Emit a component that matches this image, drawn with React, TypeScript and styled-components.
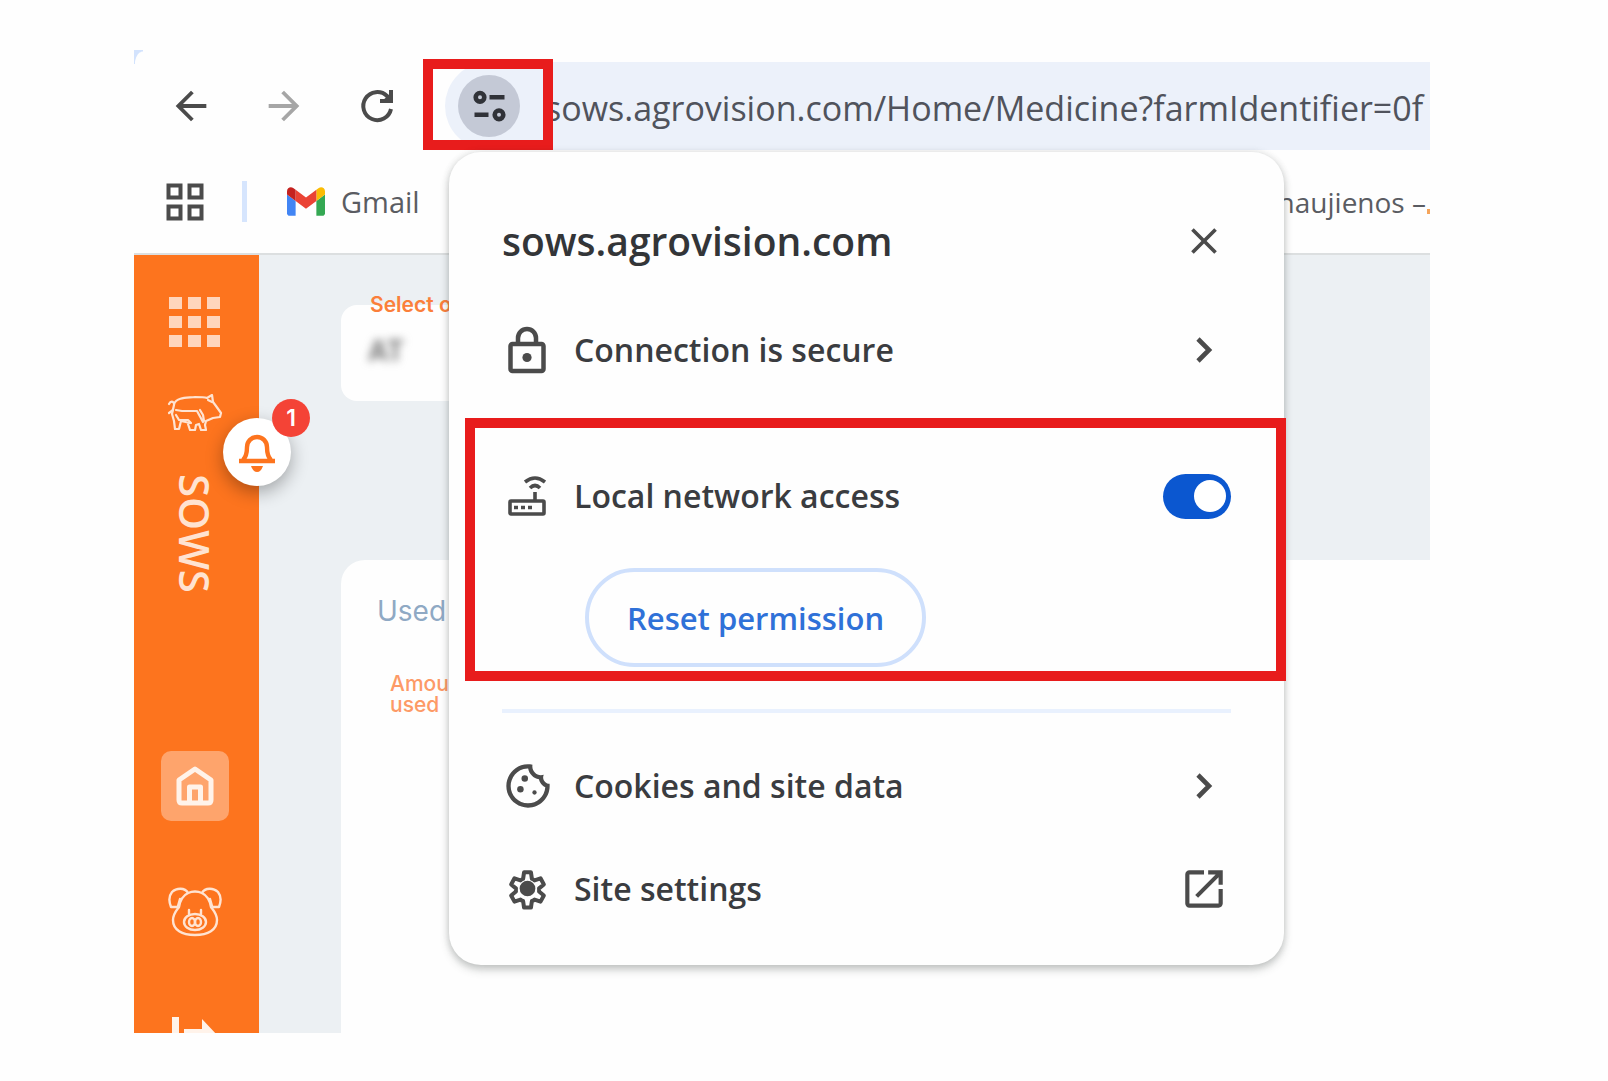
import React from "react";
import styled, { createGlobalStyle } from "styled-components";
import {
  MdArrowBack,
  MdArrowForward,
  MdClose,
  MdOpenInNew,
  MdOutlineCookie,
} from "react-icons/md";

const uiFont = `"Open Sans", "Noto Sans", sans-serif`;
const appFont = `Inter, "Open Sans", sans-serif`;
const ink = "#4b4b4b";
const orange = "#fd741e";

const GlobalStyle = createGlobalStyle`
  * { box-sizing: border-box; }
  body { margin: 0; background: #fefefe; font-family: ${uiFont}; }
  button { border: 0; padding: 0; background: none; font: inherit; color: inherit; cursor: pointer; }
  svg { display: block; flex: none; }
`;

const Page = styled.main`
  height: 100vh;
  padding: 50px 178px 48px 134px;
`;

const Browser = styled.div`
  position: relative;
  height: 100%;
  display: flex;
  flex-direction: column;
  overflow: hidden;

  &::before {
    content: "";
    position: absolute;
    top: 0;
    left: 0;
    width: 9px;
    height: 14px;
    background: radial-gradient(ellipse at 100% 100%, transparent 60%, #d3e3fd 66%);
  }
`;

const Toolbar = styled.header`
  display: flex;
  align-items: center;
  padding: 12px 0 0 26px;
`;

const NavButtons = styled.nav`
  display: flex;
  gap: 31px;
  margin-right: 37px;
`;

const NavButton = styled.button<{ $dim?: boolean }>`
  display: grid;
  place-items: center;
  width: 62px;
  height: 62px;
  color: ${(p) => (p.$dim ? "#a6a6a6" : ink)};
`;

const Omnibox = styled.div`
  position: relative;
  flex: 1;
  min-width: 0;
  display: flex;
  align-items: center;
  gap: 25px;
  height: 88px;
  padding-left: 13px;
  border-radius: 44px 0 0 44px;
  background: #ecf1fa;
`;

const SiteInfoButton = styled.button`
  display: grid;
  place-items: center;
  flex: none;
  width: 62px;
  height: 62px;
  border-radius: 50%;
  background: #c4c9d6;
  color: #303238;
`;

const UrlInput = styled.input`
  flex: 1;
  min-width: 0;
  border: 0;
  padding: 4px 0 0;
  outline: 0;
  background: none;
  font: 400 34px/48px ${uiFont};
  color: #50535c;
`;

const ButtonMarker = styled.div`
  position: absolute;
  top: -3px;
  left: -22px;
  width: 130px;
  height: 91px;
  border: 10px solid #e81c1c;
  pointer-events: none;
`;

const Bookmarks = styled.nav`
  display: flex;
  align-items: center;
  height: 105px;
  padding-left: 32px;
  border-bottom: 2px solid #dcdfe0;
`;

const Separator = styled.span`
  width: 5px;
  height: 41px;
  margin: 0 40px 0 38px;
  background: #d6e5fd;
`;

const Bookmark = styled.a`
  display: flex;
  align-items: center;
  gap: 16px;
  white-space: nowrap;
  text-decoration: none;
  font-size: 29px;
  line-height: 40px;
  color: #5a5c62;
`;

const LastBookmark = styled(Bookmark)`
  margin-left: auto;
  gap: 0;
  font-size: 28px;

  &::after {
    content: "";
    align-self: flex-end;
    width: 3px;
    height: 5px;
    margin: 0 0 8px 1px;
    background: #f5a55b;
  }
`;

const AppArea = styled.div`
  position: relative;
  flex: 1;
  min-height: 0;
  display: flex;
  background: #ecf0f3;
  font-family: ${appFont};
`;

const Sidebar = styled.aside`
  flex: none;
  display: flex;
  flex-direction: column;
  align-items: center;
  width: 125px;
  padding: 42px 4px 0 0;
  background: ${orange};
  color: #ffe3d1;
`;

const ModuleName = styled.strong`
  height: 120px;
  margin: 43px 0 158px;
  writing-mode: vertical-rl;
  font-family: ${uiFont};
  font-size: 42px;
  line-height: 44px;
  font-weight: 600;
`;

const SideButton = styled.button<{ $active?: boolean }>`
  display: grid;
  place-items: center;
  flex: none;
  width: 68px;
  height: 70px;
  border-radius: 10px;
  background: ${(p) => (p.$active ? "#fea46c" : "none")};
  color: ${(p) => (p.$active ? "#fff3ea" : "#ffe3d1")};
`;

const SideLinks = styled.nav`
  display: flex;
  flex-direction: column;
  gap: 56px;
`;

const PlainSideButton = styled.button`
  margin-bottom: 47px;
`;

const Alerts = styled.button`
  position: absolute;
  top: 163px;
  left: 89px;
  display: grid;
  place-items: center;
  width: 68px;
  height: 68px;
  border-radius: 50%;
  background: #ffffff;
  color: ${orange};
  box-shadow: 0 6px 18px rgba(0, 0, 0, 0.32);
`;

const AlertCount = styled.span`
  position: absolute;
  top: -19px;
  right: -19px;
  width: 38px;
  height: 38px;
  border-radius: 50%;
  background: #f44336;
  color: #ffffff;
  font: 600 23px/38px ${appFont};
  text-align: center;
`;

const Content = styled.section`
  flex: 1;
  min-width: 0;
  display: flex;
  flex-direction: column;
  gap: 159px;
  padding: 50px 0 0 82px;
`;

const Field = styled.div`
  position: relative;
  width: 480px;
  height: 96px;
  padding: 26px 27px;
  border-radius: 16px;
  background: #fefefe;
`;

const FieldLabel = styled.label`
  position: absolute;
  top: -14px;
  left: 29px;
  font-size: 21px;
  line-height: 28px;
  font-weight: 600;
  color: #fb7f3a;
`;

const FieldInput = styled.input`
  width: 100%;
  border: 0;
  padding: 0;
  background: none;
  font: 600 28px/40px ${appFont};
  color: #6c6c6c;
  filter: blur(4px);
`;

const Panel = styled.article`
  flex: 1;
  padding: 29px 36px;
  border-radius: 24px 0 0 0;
  background: #fefefe;
`;

const PanelTitle = styled.h2`
  margin: 0 0 40px;
  font-size: 28px;
  line-height: 44px;
  font-weight: 400;
  color: #8fa9c4;
`;

const ColumnLabel = styled.p`
  width: 80px;
  margin: 0 0 0 13px;
  font-size: 21px;
  line-height: 21px;
  font-weight: 500;
  color: #fd9a66;
`;

const Popup = styled.section`
  position: absolute;
  top: 102px;
  left: 315px;
  width: 835px;
  padding-bottom: 25px;
  border-radius: 32px;
  background: #fefefe;
  box-shadow: 0 5px 8px rgba(60, 70, 66, 0.26), 0 0 7px rgba(60, 70, 66, 0.16);
  color: #3a3c40;
`;

const PopupHeader = styled.header`
  display: flex;
  align-items: center;
  justify-content: space-between;
  height: 146px;
  padding: 32px 53px 0;
`;

const PopupTitle = styled.h1`
  margin: 0;
  font-size: 39px;
  line-height: 48px;
  font-weight: 600;
  color: #333538;
`;

const EndSlot = styled.span`
  display: grid;
  place-items: center;
  width: 54px;
  height: 54px;
  color: ${ink};
`;

const rowLayout = `
  display: flex;
  align-items: center;
  gap: 22px;
  width: 100%;
  text-align: left;
  font-size: 32px;
  line-height: 44px;
  font-weight: 600;
`;

const RowButton = styled.button`
  && {
    ${rowLayout}
    height: 103px;
    padding: 0 53px;
  }
`;

const ToggleRow = styled.label`
  ${rowLayout}
  height: 136px;
`;

const RowIcon = styled.span`
  display: grid;
  place-items: center;
  width: 50px;
  color: ${ink};
`;

const RowText = styled.span`
  flex: 1;
`;

const Permission = styled.div`
  margin: 17px -2px 28px 16px;
  padding: 0 45px 4px 27px;
  border: 10px solid #e81c1c;
`;

const Toggle = styled.input`
  appearance: none;
  display: flex;
  justify-content: flex-end;
  align-items: center;
  width: 68px;
  height: 45px;
  margin: 0;
  padding: 5px;
  border-radius: 23px;
  background: #0b57d0;

  &::before {
    content: "";
    width: 32px;
    height: 32px;
    border-radius: 50%;
    background: #ffffff;
  }

  &:not(:checked) {
    justify-content: flex-start;
    background: #8a8d93;
  }
`;

const ResetButton = styled.button`
  && {
    height: 99px;
    margin: 4px 0 0 83px;
    padding: 0 38px;
    border: 4px solid #cfe0fc;
    border-radius: 50px;
    font-size: 31px;
    line-height: 44px;
    font-weight: 600;
    color: #2f71d8;
  }
`;

const Divider = styled.hr`
  height: 4px;
  margin: 0 53px 21px;
  border: 0;
  background: #e9f1fe;
`;

const ReloadIcon = () => (
  <svg width="36" height="36" viewBox="0 0 36 36" fill="none" stroke="currentColor" strokeWidth="4">
    <path d="M32 21A14 14 0 1 1 28 8l4 4" />
    <path d="M32 2v11H21" />
    <path d="M32 5v8h-9z" fill="currentColor" stroke="none" />
  </svg>
);

const TuneIcon = () => (
  <svg width="34" height="32" viewBox="0 0 34 32" fill="none" stroke="currentColor" strokeWidth="4.600">
    <circle cx="8" cy="7.300" r="4.300" />
    <path d="M17.500 7.300h15M2.500 24.800h14" />
    <circle cx="27" cy="24.800" r="4.300" />
  </svg>
);

const BookmarkAppsIcon = () => (
  <svg width="38" height="38" viewBox="0 0 38 38" fill="none" stroke={ink} strokeWidth="4">
    <path d="M2.500 2.500h12v12h-12zM23.500 2.500h12v12h-12zM2.500 23.500h12v12h-12zM23.500 23.500h12v12h-12z" />
  </svg>
);

const GmailIcon = () => (
  <svg width="38" height="29" viewBox="52 42 88 66">
    <path fill="#4285f4" d="M58 108h14V74L52 59v43c0 3.320 2.690 6 6 6" />
    <path fill="#34a853" d="M120 108h14c3.320 0 6-2.690 6-6V59l-20 15" />
    <path fill="#fbbc04" d="M120 48v26l20-15v-8c0-7.420-8.470-11.650-14.400-7.200" />
    <path fill="#ea4335" d="M72 74V48l24 18 24-18v26L96 92" />
    <path fill="#c5221f" d="M52 51v8l20 15V48l-5.600-4.200c-5.940-4.450-14.400-.220-14.400 7.200" />
  </svg>
);

const WaffleIcon = () => (
  <svg width="51" height="50" viewBox="0 0 51 50" fill="#ffd5bc">
    {[0, 19, 38].map((y) =>
      [0, 19, 38].map((x) => <rect key={`${x}-${y}`} x={x} y={y} width="13" height="12" />)
    )}
  </svg>
);

const PigIcon = () => (
  <svg width="56" height="37" viewBox="0 0 56 37" fill="none" stroke="currentColor" strokeWidth="2.200" strokeLinejoin="round" strokeLinecap="round">
    <path d="M2 10c2-4 6-2 5 1M7 10C10 3 20 4 28 3c6 0 9 0 12 1l5-3 1 7 3 4 5 7-1 4-7 1-7 3-1 4 1 5h-5l-2-6-3 1-1 5h-5l-2-6M23 29l-9-2-2 8H8l-1-8-2-7 2-9" />
    <path d="M2 19l4-3M9 16l6 1h15l6 11M33 16l3 5 1 6M9 21l3 5h9l3 3M45 8l-4-2" />
  </svg>
);

const HomeIcon = () => (
  <svg width="40" height="42" viewBox="0 0 40 42" fill="none" stroke="currentColor" strokeWidth="5" strokeLinejoin="round">
    <path d="M20 4L4 15v20q0 3 3 3h26q3 0 3-3V15z" />
    <path d="M14.500 38V22h11v16" />
  </svg>
);

const PigFaceIcon = () => (
  <svg width="54" height="50" viewBox="0 0 54 50" fill="none" stroke="currentColor" strokeWidth="2.400" strokeLinejoin="round" strokeLinecap="round">
    <path d="M20 6q7-3 14 0c6 3 8 8 9 14 3 4 6 7 6 13 0 10-9 15-22 15S5 43 5 33c0-6 3-9 6-13 1-6 3-11 9-14z" />
    <path d="M20 6C17 0 8 1 4 5c-4 5-3 10-1 15h7M12 12l-2 7M34 6c3-6 12-5 16-1 4 5 3 10 1 15h-7M42 12l2 7M21 23v4M33 23v4" />
    <ellipse cx="27" cy="35" rx="11" ry="8" />
    <ellipse cx="24" cy="35" rx="3" ry="4" />
    <ellipse cx="30" cy="35" rx="3" ry="4" />
  </svg>
);

const ExitIcon = () => (
  <svg width="48" height="42" viewBox="0 0 48 42" fill="#fff3ea">
    <path d="M1 0h7v42H1zM13 12h18V2l16 17-16 17V25H13z" />
  </svg>
);

const BellIcon = () => (
  <svg width="36" height="40" viewBox="0 0 36 40" fill="none" stroke="currentColor" strokeWidth="4.400">
    <path d="M4 28q4-4 4-13a10 10 0 0 1 20 0q0 9 4 13" />
    <path d="M0 29h36" />
    <path d="M12 34h12q-2 6-6 6t-6-6z" fill="currentColor" stroke="none" />
  </svg>
);

const LockIcon = () => (
  <svg width="38" height="48" viewBox="0 0 38 48" fill="none" stroke="currentColor" strokeWidth="4.500">
    <rect x="2.500" y="18" width="33" height="27" rx="2" />
    <path d="M10 18v-6a9 9 0 0 1 18 0v6" />
    <circle cx="19" cy="31.500" r="4.600" fill="currentColor" stroke="none" />
  </svg>
);

const RouterIcon = () => (
  <svg width="38" height="42" viewBox="0 0 38 42" fill="none" stroke="currentColor" strokeWidth="3.600">
    <rect x="2" y="26" width="34" height="13" rx="1" />
    <path d="M27 26v-9M17 7q10-8 20 0M22 13q5-5 10 0" />
    <path d="M6 32.500h4M13 32.500h4M20 32.500h4" />
  </svg>
);

const SettingsIcon = () => (
  <svg width="47" height="47" viewBox="0 -960 960 960">
    <path
      fill="none"
      stroke="currentColor"
      strokeWidth="82"
      strokeLinejoin="round"
      d="m410-90-20-134q-22-5-54-30l-122 42-68-126 98-80q-4-32 0-64l-98-80 68-126 122 42q32-25 54-30l20-134h140l20 134q22 5 54 30l122-42 68 126-98 80q4 32 0 64l98 80-68 126-122-42q-32 25-54 30l-20 134z"
    />
    <circle cx="480" cy="-480" r="160" fill="currentColor" />
  </svg>
);

const ChevronIcon = () => (
  <svg width="20" height="28" viewBox="0 0 20 28" fill="none" stroke="currentColor" strokeWidth="4.600">
    <path d="M4 3l11 11L4 25" />
  </svg>
);

export default function App() {
  return (
    <Page>
      <GlobalStyle />
      <Browser>
        <Toolbar>
          <NavButtons aria-label="Navigation">
            <NavButton aria-label="Back"><MdArrowBack size={46} /></NavButton>
            <NavButton aria-label="Forward" $dim><MdArrowForward size={46} /></NavButton>
            <NavButton aria-label="Reload"><ReloadIcon /></NavButton>
          </NavButtons>
          <Omnibox>
            <SiteInfoButton aria-label="View site information"><TuneIcon /></SiteInfoButton>
            <UrlInput
              aria-label="Address"
              readOnly
              value="sows.agrovision.com/Home/Medicine?farmIdentifier=0f"
            />
            <ButtonMarker />
          </Omnibox>
        </Toolbar>

        <Bookmarks aria-label="Bookmarks">
          <button aria-label="Apps"><BookmarkAppsIcon /></button>
          <Separator />
          <Bookmark href="#gmail"><GmailIcon />Gmail</Bookmark>
          <LastBookmark href="#naujienos">naujienos –</LastBookmark>
        </Bookmarks>

        <AppArea>
          <Sidebar>
            <PlainSideButton aria-label="Modules"><WaffleIcon /></PlainSideButton>
            <PigIcon />
            <ModuleName>SOWS</ModuleName>
            <SideLinks aria-label="Sections">
              <SideButton aria-label="Home" $active><HomeIcon /></SideButton>
              <SideButton aria-label="Animals"><PigFaceIcon /></SideButton>
              <SideButton aria-label="Departures"><ExitIcon /></SideButton>
            </SideLinks>
          </Sidebar>
          <Content>
            <Field>
              <FieldLabel htmlFor="selection">Select o</FieldLabel>
              <FieldInput id="selection" readOnly value="AT" />
            </Field>
            <Panel>
              <PanelTitle>Used</PanelTitle>
              <ColumnLabel>Amount used</ColumnLabel>
            </Panel>
          </Content>
          <Alerts aria-label="Notifications">
            <BellIcon />
            <AlertCount>1</AlertCount>
          </Alerts>
        </AppArea>

        <Popup aria-label="Site information">
          <PopupHeader>
            <PopupTitle>sows.agrovision.com</PopupTitle>
            <button aria-label="Close"><EndSlot><MdClose size={44} /></EndSlot></button>
          </PopupHeader>
          <RowButton>
            <RowIcon><LockIcon /></RowIcon>
            <RowText>Connection is secure</RowText>
            <EndSlot><ChevronIcon /></EndSlot>
          </RowButton>
          <Permission>
            <ToggleRow>
              <RowIcon><RouterIcon /></RowIcon>
              <RowText>Local network access</RowText>
              <Toggle type="checkbox" role="switch" defaultChecked />
            </ToggleRow>
            <ResetButton>Reset permission</ResetButton>
          </Permission>
          <Divider />
          <RowButton>
            <RowIcon><MdOutlineCookie size={52} /></RowIcon>
            <RowText>Cookies and site data</RowText>
            <EndSlot><ChevronIcon /></EndSlot>
          </RowButton>
          <RowButton>
            <RowIcon><SettingsIcon /></RowIcon>
            <RowText>Site settings</RowText>
            <EndSlot><MdOpenInNew size={50} /></EndSlot>
          </RowButton>
        </Popup>
      </Browser>
    </Page>
  );
}
